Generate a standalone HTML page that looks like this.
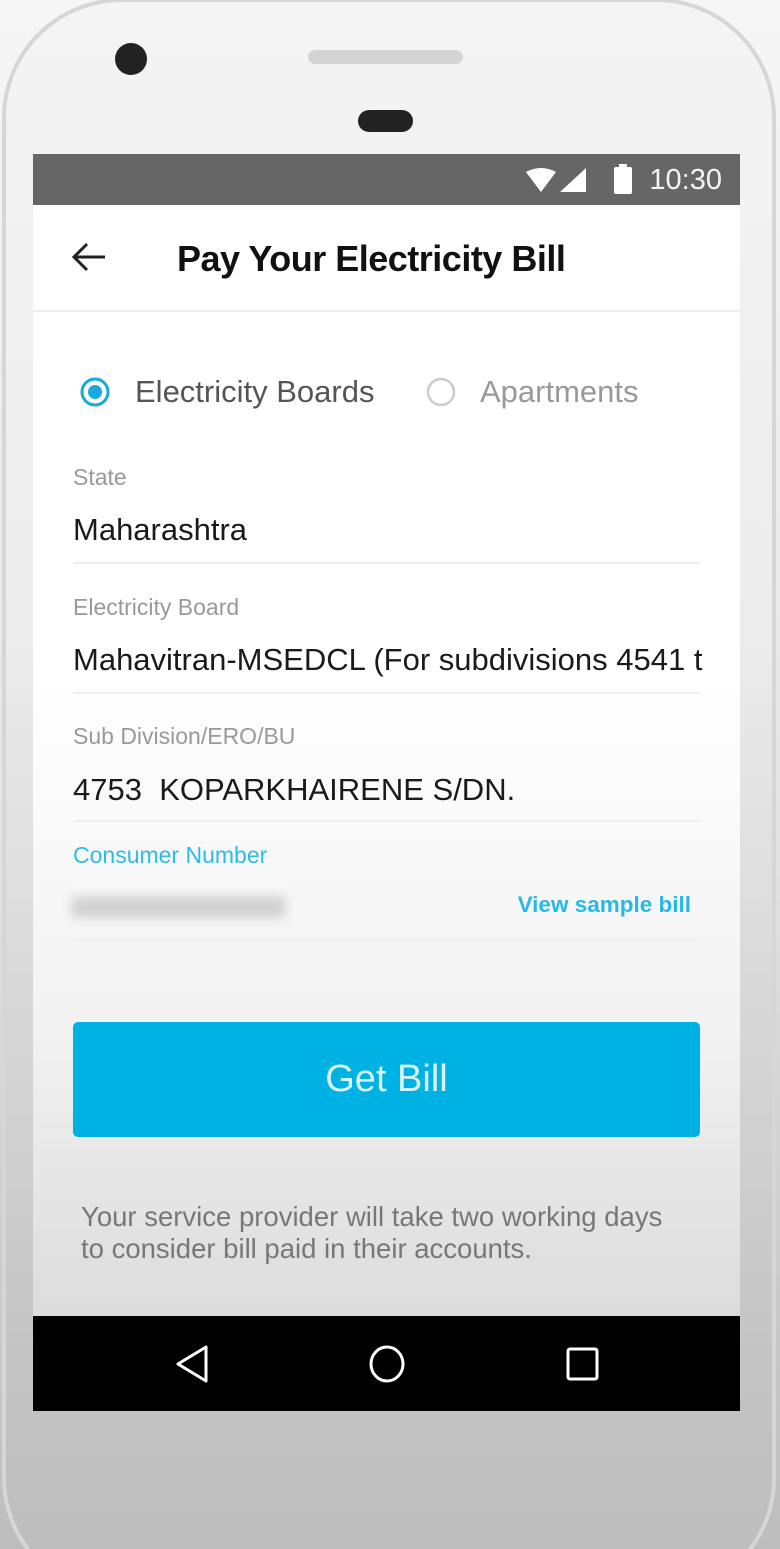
<!DOCTYPE html>
<html style="overflow:hidden;width:780px;height:1549px"><head><meta charset="utf-8"><style>
*{margin:0;padding:0;box-sizing:border-box}
body{width:780px;height:1549px;overflow:hidden;background:linear-gradient(#f6f6f6,#e6e6e6 50%,#bdbdbd);font-family:"Liberation Sans",sans-serif;position:relative}
.phone{position:absolute;left:2px;top:-2px;width:774px;height:1600px;border-radius:120px;border:4px solid #d6d6d6;background:linear-gradient(#f4f4f4,#ececec 40%,#c4c4c4 85%,#bcbcbc)}
.cam{position:absolute;left:115px;top:43px;width:32px;height:32px;border-radius:50%;background:#222}
.spk{position:absolute;left:308px;top:50px;width:155px;height:14px;border-radius:7px;background:#d4d4d4}
.prox{position:absolute;left:358px;top:110px;width:55px;height:22px;border-radius:11px;background:#222}
.screen{position:absolute;left:33px;top:154px;width:707px;height:1162px;background:linear-gradient(#fff 0,#fff 45%,#f2f2f2 75%,#dcdcdc 100%);overflow:hidden}
.status{height:51px;background:#666;position:relative;color:#fff}
.time{position:absolute;right:18px;top:10px;font-size:29px;color:#f4f4f4}
.hdr{height:107px;border-bottom:2px solid #eee;position:relative}
.title{position:absolute;left:144px;top:33px;font-size:36px;font-weight:bold;color:#111;letter-spacing:-0.5px}
.lbl{position:absolute;left:40px;font-size:23px;color:#999}
.val{position:absolute;left:40px;font-size:31px;color:#1a1a1a;white-space:nowrap;width:630px;overflow:hidden}
.line{position:absolute;left:40px;width:627px;height:2px;background:#eee}
.btn{position:absolute;left:40px;top:868px;width:627px;height:115px;background:#00b1e4;border-radius:5px;color:#d8f4fc;font-size:38px;text-align:center;line-height:115px}
.note{position:absolute;left:48px;top:1047px;font-size:27.5px;color:#777;line-height:32px}
.nav{position:absolute;left:33px;top:1316px;width:707px;height:95px;background:#000}
</style></head><body>
<div class="phone"></div>
<div class="cam"></div><div class="spk"></div><div class="prox"></div>
<div class="screen">
 <div class="status">
  <svg style="position:absolute;left:493px;top:14px" width="62" height="26"><path d="M0 4 Q15 -4 30 4 L15 24Z" fill="#fff"/><path d="M34 24 L60 24 L60 0Z" fill="#fff"/></svg>
  <svg style="position:absolute;left:580px;top:10px" width="22" height="32"><rect x="6" y="0" width="8" height="4" fill="#fff"/><rect x="1" y="3" width="18" height="27" rx="2" fill="#fff"/></svg>
  <div class="time">10:30</div>
 </div>
 <div class="hdr">
  <svg style="position:absolute;left:38px;top:36px" width="36" height="32"><path d="M34 16 H4 M16 3 L3 16 L16 29" stroke="#222" stroke-width="3" fill="none"/></svg>
  <div class="title">Pay Your Electricity Bill</div>
 </div>
 <svg style="position:absolute;left:46px;top:222px" width="32" height="32"><circle cx="16" cy="16" r="13" stroke="#1aa9de" stroke-width="3" fill="none"/><circle cx="16" cy="16" r="7" fill="#1aa9de"/></svg>
 <div style="position:absolute;left:102px;top:220px;font-size:31px;color:#555">Electricity Boards</div>
 <svg style="position:absolute;left:392px;top:222px" width="32" height="32"><circle cx="16" cy="16" r="13" stroke="#ccc" stroke-width="2.5" fill="none"/></svg>
 <div style="position:absolute;left:447px;top:220px;font-size:31px;color:#999">Apartments</div>
 <div class="lbl" style="top:310px">State</div>
 <div class="val" style="top:358px">Maharashtra</div>
 <div class="line" style="top:408px"></div>
 <div class="lbl" style="top:440px">Electricity Board</div>
 <div class="val" style="top:488px">Mahavitran-MSEDCL (For subdivisions 4541 to</div>
 <div class="line" style="top:538px"></div>
 <div class="lbl" style="top:569px">Sub Division/ERO/BU</div>
 <div class="val" style="top:618px">4753&nbsp; KOPARKHAIRENE S/DN.</div>
 <div class="line" style="top:666px"></div>
 <div class="lbl" style="top:688px;color:#2cbce8">Consumer Number</div>
 <div style="position:absolute;left:38px;top:742px;width:215px;height:22px;background:#d2d2d2;filter:blur(5px);border-radius:6px"></div>
 <div style="position:absolute;right:49px;top:738px;font-size:22.5px;font-weight:bold;color:#28b8e6">View sample bill</div>
 <div class="line" style="top:785px"></div>
 <div class="btn">Get Bill</div>
 <div class="note">Your service provider will take two working days<br>to consider bill paid in their accounts.</div>
</div>
<div class="nav">
 <svg style="position:absolute;left:140px;top:28px" width="40" height="40"><path d="M33 3 L5 20 L33 37Z" stroke="#fff" stroke-width="3" fill="none" stroke-linejoin="round"/></svg>
 <svg style="position:absolute;left:334px;top:28px" width="40" height="40"><ellipse cx="20" cy="20" rx="16" ry="17" stroke="#fff" stroke-width="3" fill="none"/></svg>
 <svg style="position:absolute;left:532px;top:30px" width="36" height="36"><rect x="3" y="3" width="29" height="30" rx="2" stroke="#fff" stroke-width="3" fill="none"/></svg>
</div>
</body></html>
